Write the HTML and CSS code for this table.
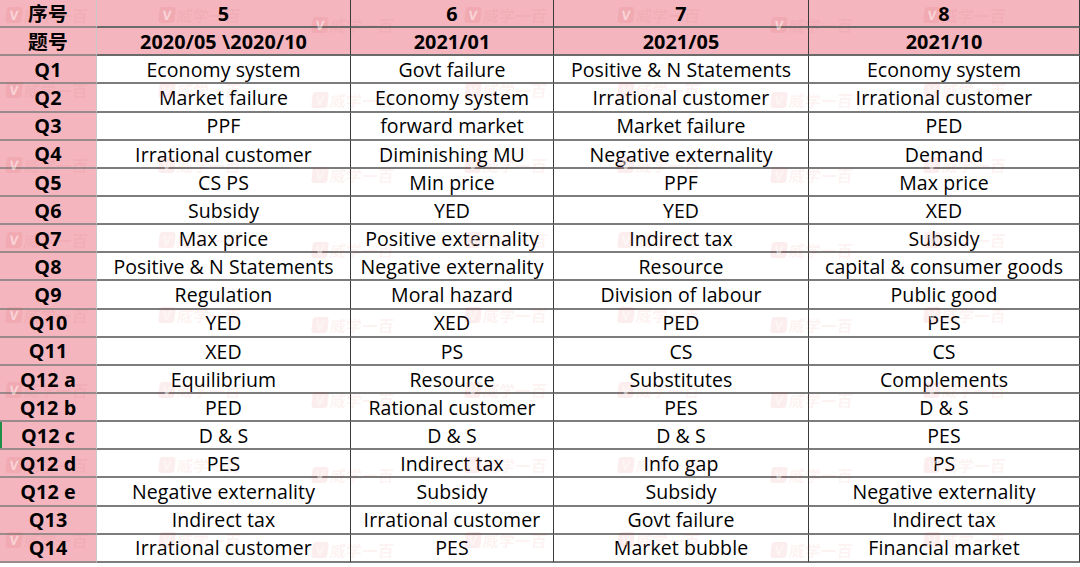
FILE: index.html
```html
<!DOCTYPE html>
<html lang="zh">
<head>
<meta charset="utf-8">
<link rel="stylesheet" href="styles.css">
</head>
<body>
<div class="sheet">
  <div class="grid">
    <div class="c key hd">序号</div><div class="c hd">5</div><div class="c hd">6</div><div class="c hd">7</div><div class="c hd last">8</div>
    <div class="c key hd">题号</div><div class="c hd">2020/05 \2020/10</div><div class="c hd">2021/01</div><div class="c hd">2021/05</div><div class="c hd last">2021/10</div>
    <div class="c key">Q1</div><div class="c">Economy system</div><div class="c">Govt failure</div><div class="c">Positive &amp; N Statements</div><div class="c last">Economy system</div>
    <div class="c key">Q2</div><div class="c">Market failure</div><div class="c">Economy system</div><div class="c">Irrational customer</div><div class="c last">Irrational customer</div>
    <div class="c key">Q3</div><div class="c">PPF</div><div class="c">forward market</div><div class="c">Market failure</div><div class="c last">PED</div>
    <div class="c key">Q4</div><div class="c">Irrational customer</div><div class="c">Diminishing MU</div><div class="c">Negative externality</div><div class="c last">Demand</div>
    <div class="c key">Q5</div><div class="c">CS PS</div><div class="c">Min price</div><div class="c">PPF</div><div class="c last">Max price</div>
    <div class="c key">Q6</div><div class="c">Subsidy</div><div class="c">YED</div><div class="c">YED</div><div class="c last">XED</div>
    <div class="c key">Q7</div><div class="c">Max price</div><div class="c">Positive externality</div><div class="c">Indirect tax</div><div class="c last">Subsidy</div>
    <div class="c key">Q8</div><div class="c">Positive &amp; N Statements</div><div class="c">Negative externality</div><div class="c">Resource</div><div class="c last">capital &amp; consumer goods</div>
    <div class="c key">Q9</div><div class="c">Regulation</div><div class="c">Moral hazard</div><div class="c">Division of labour</div><div class="c last">Public good</div>
    <div class="c key">Q10</div><div class="c">YED</div><div class="c">XED</div><div class="c">PED</div><div class="c last">PES</div>
    <div class="c key">Q11</div><div class="c">XED</div><div class="c">PS</div><div class="c">CS</div><div class="c last">CS</div>
    <div class="c key">Q12 a</div><div class="c">Equilibrium</div><div class="c">Resource</div><div class="c">Substitutes</div><div class="c last">Complements</div>
    <div class="c key">Q12 b</div><div class="c">PED</div><div class="c">Rational customer</div><div class="c">PES</div><div class="c last">D &amp; S</div>
    <div class="c key sel">Q12 c</div><div class="c">D &amp; S</div><div class="c">D &amp; S</div><div class="c">D &amp; S</div><div class="c last">PES</div>
    <div class="c key">Q12 d</div><div class="c">PES</div><div class="c">Indirect tax</div><div class="c">Info gap</div><div class="c last">PS</div>
    <div class="c key">Q12 e</div><div class="c">Negative externality</div><div class="c">Subsidy</div><div class="c">Subsidy</div><div class="c last">Negative externality</div>
    <div class="c key">Q13</div><div class="c">Indirect tax</div><div class="c">Irrational customer</div><div class="c">Govt failure</div><div class="c last">Indirect tax</div>
    <div class="c key">Q14</div><div class="c">Irrational customer</div><div class="c">PES</div><div class="c">Market bubble</div><div class="c last">Financial market</div>
  </div>
  <div class="marks" aria-hidden="true">
    <span class="wm"><i>V</i>威学一百</span><span class="wm"><i>V</i>威学一百</span><span class="wm"><i>V</i>威学一百</span><span class="wm"><i>V</i>威学一百</span><span class="wm"><i>V</i>威学一百</span><span class="wm"><i>V</i>威学一百</span><span class="wm"><i>V</i>威学一百</span>
    <span class="wm"><i>V</i>威学一百</span><span class="wm"><i>V</i>威学一百</span><span class="wm"><i>V</i>威学一百</span><span class="wm"><i>V</i>威学一百</span><span class="wm"><i>V</i>威学一百</span><span class="wm"><i>V</i>威学一百</span><span class="wm"><i>V</i>威学一百</span>
    <span class="wm"><i>V</i>威学一百</span><span class="wm"><i>V</i>威学一百</span><span class="wm"><i>V</i>威学一百</span><span class="wm"><i>V</i>威学一百</span><span class="wm"><i>V</i>威学一百</span><span class="wm"><i>V</i>威学一百</span><span class="wm"><i>V</i>威学一百</span>
    <span class="wm"><i>V</i>威学一百</span><span class="wm"><i>V</i>威学一百</span><span class="wm"><i>V</i>威学一百</span><span class="wm"><i>V</i>威学一百</span><span class="wm"><i>V</i>威学一百</span><span class="wm"><i>V</i>威学一百</span><span class="wm"><i>V</i>威学一百</span>
    <span class="wm"><i>V</i>威学一百</span><span class="wm"><i>V</i>威学一百</span><span class="wm"><i>V</i>威学一百</span><span class="wm"><i>V</i>威学一百</span><span class="wm"><i>V</i>威学一百</span><span class="wm"><i>V</i>威学一百</span><span class="wm"><i>V</i>威学一百</span>
    <span class="wm"><i>V</i>威学一百</span><span class="wm"><i>V</i>威学一百</span><span class="wm"><i>V</i>威学一百</span><span class="wm"><i>V</i>威学一百</span><span class="wm"><i>V</i>威学一百</span><span class="wm"><i>V</i>威学一百</span><span class="wm"><i>V</i>威学一百</span>
    <span class="wm"><i>V</i>威学一百</span><span class="wm"><i>V</i>威学一百</span><span class="wm"><i>V</i>威学一百</span><span class="wm"><i>V</i>威学一百</span><span class="wm"><i>V</i>威学一百</span><span class="wm"><i>V</i>威学一百</span><span class="wm"><i>V</i>威学一百</span>
    <span class="wm"><i>V</i>威学一百</span><span class="wm"><i>V</i>威学一百</span><span class="wm"><i>V</i>威学一百</span><span class="wm"><i>V</i>威学一百</span><span class="wm"><i>V</i>威学一百</span><span class="wm"><i>V</i>威学一百</span><span class="wm"><i>V</i>威学一百</span>
  </div>
</div>
</body>
</html>
```

FILE: styles.css
```css
html, body {
  margin: 0;
  padding: 0;
  background: #ffffff;
}

.sheet {
  position: relative;
  width: 1080px;
  height: 567px;
  overflow: hidden;
  font-family: "Open Sans", "Noto Sans CJK SC", sans-serif;
  color: #000;
}

.grid {
  display: grid;
  grid-template-columns: 97px 254px 203px 255px 271px;
  grid-auto-rows: 28.15px;
}

.c {
  box-sizing: border-box;
  display: flex;
  align-items: center;
  justify-content: center;
  white-space: nowrap;
  font-size: 19.5px;
  line-height: 1;
  letter-spacing: 0.1px;
  border-right: 1px solid #3a3a3a;
  border-bottom: 2px solid #7c7c7c;
  padding-top: 1px;
}

.c.last {
  border-right: 1px solid #3a3a3a;
}

.hd {
  background: #f4b5be;
  font-weight: 700;
  font-size: 19.8px;
  border-bottom-color: #6a6a6a;
}

.key {
  background: #f4b5be;
  font-weight: 700;
  font-size: 19.8px;
  border-right: 1px solid #c9c9c9;
  border-bottom-color: #9a8a8c;
}

.key.sel {
  box-shadow: inset 2px 0 0 #1f8f4a;
}

.marks {
  position: absolute;
  inset: 0;
  pointer-events: none;
  display: grid;
  grid-template-columns: repeat(7, 153px);
  grid-auto-rows: 75px;
  padding: 5px 0 0 6px;
}

.wm {
  display: inline-flex;
  align-items: center;
  gap: 2px;
  height: 20px;
  font-family: "Noto Sans CJK SC", sans-serif;
  font-weight: 700;
  font-size: 16px;
  color: rgba(226, 70, 70, 0.08);
  transform: skewX(-6deg);
}

.wm i {
  display: inline-flex;
  align-items: center;
  justify-content: center;
  width: 16px;
  height: 16px;
  border-radius: 3px;
  background: rgba(226, 70, 70, 0.09);
  color: rgba(255, 255, 255, 0.5);
  font-style: normal;
  font-family: "Open Sans", sans-serif;
  font-size: 13px;
  font-weight: 700;
}

.wm:nth-child(7n+3),
.wm:nth-child(7n+6) {
  margin-top: 10px;
}
```
